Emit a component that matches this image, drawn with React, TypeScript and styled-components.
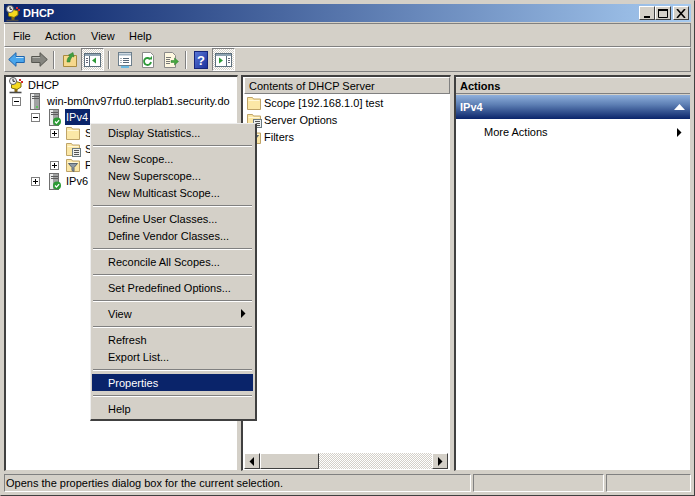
import React from "react";
import styled, { createGlobalStyle } from "styled-components";

const Global = createGlobalStyle`
  html, body { margin: 0; padding: 0; background: #d4d0c8; }
  * { box-sizing: border-box; }
`;

const Win = styled.div`
  position: relative;
  width: 695px;
  height: 496px;
  overflow: hidden;
  display: flex;
  flex-direction: column;
  background: #d4d0c8;
  color: #000;
  font: 11px/16px "Liberation Sans", "Noto Sans", sans-serif;
  border-style: solid;
  border-width: 1px;
  border-color: #d4d0c8 #404040 #404040 #d4d0c8;
  padding: 3px;
`;

const TitleBar = styled.div`
  height: 18px;
  flex: none;
  display: flex;
  align-items: center;
  padding: 0 2px 0 1px;
  background: linear-gradient(90deg, #0a246a 0%, #a6caf0 100%);
  color: #fff;
  font-weight: 700;
  font-size: 11px;
`;
const TitleText = styled.span`
  margin-left: 2px;
  flex: 1;
`;
const WinButton = styled.div<{ $gap?: number }>`
  width: 16px;
  height: 14px;
  margin-left: ${(p) => p.$gap ?? 0}px;
  background: #d4d0c8;
  border-style: solid;
  border-width: 1px;
  border-color: #fff #404040 #404040 #fff;
  display: flex;
  align-items: center;
  justify-content: center;
`;

const MenuBar = styled.div`
  height: 24px;
  flex: none;
  margin-top: 1px;
  display: flex;
  align-items: center;
  padding: 1px 0 0 8px;
  border-style: solid;
  border-width: 1px;
  border-color: #808080 #808080 #808080 #fff;
`;
const MenuLabel = styled.span<{ $w: number }>`
  width: ${(p) => p.$w}px;
`;

const ToolBar = styled.div`
  height: 25px;
  flex: none;
  display: flex;
  align-items: center;
  border-style: solid;
  border-width: 1px;
  border-color: #fff #808080 #808080 #fff;
`;
const ToolButton = styled.div<{ $pressed?: boolean }>`
  width: 23px;
  height: 23px;
  flex: none;
  display: flex;
  align-items: center;
  justify-content: center;
  ${(p) =>
    p.$pressed
      ? `border: 1px solid; border-color: #808080 #fff #fff #808080;
         background: repeating-conic-gradient(#fff 0 25%, #d4d0c8 0 50%) 0 0 / 2px 2px;`
      : ""}
`;
const ToolSep = styled.div<{ $l: number; $r: number }>`
  width: 2px;
  height: 18px;
  flex: none;
  margin: 0 ${(p) => p.$r}px 0 ${(p) => p.$l}px;
  border-left: 1px solid #808080;
  border-right: 1px solid #fff;
`;

const Panes = styled.div`
  flex: 1;
  min-height: 0;
  display: flex;
  margin-top: 3px;
  gap: 3px;
`;
const Pane = styled.div<{ $w: number }>`
  width: ${(p) => p.$w}px;
  flex: none;
  background: #fff;
  border-style: solid;
  border-width: 2px 1px 1px 2px;
  border-color: #404040 #d4d0c8 #d4d0c8 #404040;
  display: flex;
  flex-direction: column;
  min-height: 0;
`;
const TreeBody = styled.div`
  flex: 1;
`;
const TreeRow = styled.div`
  height: 16px;
  display: flex;
  align-items: center;
  white-space: nowrap;
  padding-left: 2px;
`;
const Indent = styled.div<{ $level: number }>`
  width: ${(p) => p.$level * 19}px;
  flex: none;
  display: flex;
  justify-content: flex-end;
  padding-right: 6px;
`;
const Expander = styled.div`
  width: 9px;
  height: 9px;
  border: 1px solid #808080;
  background: #fff;
  position: relative;
  &::before {
    content: "";
    position: absolute;
    left: 1px;
    right: 1px;
    top: 3px;
    height: 1px;
    background: #000;
  }
`;
const ExpanderPlus = styled(Expander)`
  &::after {
    content: "";
    position: absolute;
    top: 1px;
    bottom: 1px;
    left: 3px;
    width: 1px;
    background: #000;
  }
`;
const IconSlot = styled.div`
  width: 16px;
  height: 16px;
  flex: none;
  display: flex;
  align-items: center;
  justify-content: center;
`;
const NodeLabel = styled.span<{ $selected?: boolean }>`
  margin-left: ${(p) => (p.$selected ? 3 : 4)}px;
  padding: 0 ${(p) => (p.$selected ? 2 : 0)}px 0 ${(p) => (p.$selected ? 1 : 0)}px;
  ${(p) => (p.$selected ? "background:#0a246a;color:#fff;" : "")}
`;

const ColumnHeader = styled.div`
  height: 17px;
  flex: none;
  background: #d4d0c8;
  margin-left: 1px;
  padding-left: 4px;
  border-style: solid;
  border-width: 1px;
  border-color: #fff #808080 #808080 #fff;
  display: flex;
  align-items: center;
`;
const ListBody = styled.div`
  flex: 1;
  padding-left: 3px;
`;
const ListRow = styled.div`
  height: 17px;
  display: flex;
  align-items: center;
  gap: 2px;
`;
const ScrollBar = styled.div`
  height: 16px;
  flex: none;
  display: flex;
  margin: 0 2px 1px 1px;
  background: repeating-conic-gradient(#fff 0 25%, #d4d0c8 0 50%) 0 0 / 2px 2px;
`;
const ScrollButton = styled.div<{ $w: number }>`
  width: ${(p) => p.$w}px;
  flex: none;
  background: #d4d0c8;
  border-style: solid;
  border-width: 1px;
  border-color: #fff #404040 #404040 #fff;
  display: flex;
  align-items: center;
  justify-content: center;
`;
const Track = styled.div`
  flex: 1;
`;

const ActionsHeader = styled.div`
  height: 17px;
  flex: none;
  background: #d4d0c8;
  font-weight: 700;
  padding-left: 4px;
  display: flex;
  align-items: center;
  border-bottom: 1px solid #808080;
  border-top: 1px solid #fff;
`;
const ActionBand = styled.div`
  height: 25px;
  flex: none;
  border-top: 1px solid #d4d0c8;
  background: linear-gradient(180deg, #8fb0dc 0%, #5d7fb4 40%, #0a246a 100%);
  color: #fff;
  font-weight: 700;
  display: flex;
  align-items: center;
  justify-content: space-between;
  padding: 0 5px 0 4px;
`;
const ActionItem = styled.div`
  height: 26px;
  display: flex;
  align-items: center;
  justify-content: space-between;
  padding: 0 8px 0 28px;
`;

const StatusBar = styled.div`
  height: 18px;
  flex: none;
  margin-top: 3px;
  display: flex;
  gap: 2px;
`;
const StatusCell = styled.div<{ $w?: number }>`
  ${(p) => (p.$w ? `width:${p.$w}px;flex:none;` : "flex:1;")}
  padding: 0 0 1px 1px;
  display: flex;
  align-items: center;
  white-space: nowrap;
  border-style: solid;
  border-width: 1px;
  border-color: #808080 #fff #fff #808080;
`;

const ContextMenu = styled.div`
  position: absolute;
  left: 89px;
  top: 122px;
  width: 167px;
  height: 298px;
  background: #d4d0c8;
  padding: 0 2px 0 1px;
  border-style: solid;
  border-width: 1px 2px 2px 1px;
  border-color: #eeeeee #404040 #404040 #eeeeee;
  display: flex;
  flex-direction: column;
`;
const MenuItem = styled.div<{ $active?: boolean }>`
  height: 17px;
  flex: none;
  padding: 0 7px 0 16px;
  display: flex;
  align-items: center;
  justify-content: space-between;
  ${(p) => (p.$active ? "background:#0a246a;color:#fff;" : "")}
`;
const MenuSep = styled.div`
  height: 2px;
  flex: none;
  margin: 4px 1px 3px 1px;
  border-top: 1px solid #808080;
  border-bottom: 1px solid #fff;
`;

const Server = ({ check }: { check?: boolean }) => (
  <svg width="16" height="17" viewBox="0 0 16 17">
    <rect x="3.500" y=".5" width="9" height="16" fill="#a0a2a2" stroke="#707070" />
    <rect x="4" y="1" width="3" height="15" fill="#eceded" />
    <path d="M5 3.500h7M5 5.500h7" stroke="#5c5c5c" />
    <rect x="9" y="13" width="2" height="2" fill="#5fc05f" />
    {check && (
      <>
        <circle cx="11" cy="12.500" r="4" fill="#2c9a35" />
        <path d="M9 12.500l1.500 1.600 2.600-3" stroke="#fff" strokeWidth="1.300" fill="none" />
      </>
    )}
  </svg>
);
const FolderShape = () => (
  <>
    <path d="M1.500 14.500V2.500h5l1 1.500h7v10.500z" fill="#fbe7a6" stroke="#bfa468" />
    <path d="M2.500 5.500h11" stroke="#fff7d8" />
  </>
);
const Folder = () => (
  <svg width="16" height="16" viewBox="0 0 16 16">
    <FolderShape />
  </svg>
);
const OptionsFolder = () => (
  <svg width="16" height="16" viewBox="0 0 16 16">
    <FolderShape />
    <rect x="7.500" y="7.500" width="8" height="8" fill="#eef0f0" stroke="#6b7a80" />
    <path d="M9 9.500h5M9 11.500h5M9 13.500h5" stroke="#555" />
  </svg>
);
const FilterFolder = () => (
  <svg width="16" height="16" viewBox="0 0 16 16">
    <FolderShape />
    <path d="M3.500 6.500h9l-3.500 4v4l-2-1v-3z" fill="#8e9aa6" stroke="#5a6672" />
  </svg>
);
const DhcpIcon = () => (
  <svg width="16" height="17" viewBox="0 0 16 17">
    <rect x="6.500" y="10" width="3" height="5" fill="#8a6a10" />
    <path d="M1.500 15.500h12" stroke="#4a4a4a" strokeWidth="1.600" />
    <path d="M3.500 7.500l4.500-3 5 1.500v4l-4 2.500-5.500-1.500z" fill="#f5d91f" stroke="#7f6f0c" />
    <circle cx="5" cy="4" r="3.500" fill="#f4f4f4" stroke="#5a5a5a" />
    <path d="M5 1.800V4.300h2" stroke="#222" fill="none" />
    <rect x="11" y="2" width="2" height="2" fill="#d82a2a" />
    <rect x="13" y="4" width="2" height="2" fill="#d82a2a" />
  </svg>
);
const Triangle = ({ dir, color = "#000" }: { dir: "l" | "r"; color?: string }) => (
  <svg width="6" height="9" viewBox="0 0 6 9">
    <path d={dir === "r" ? "M1 0l4.500 4.500L1 9z" : "M5 0L.5 4.500 5 9z"} fill={color} />
  </svg>
);

const BackIcon = () => (
  <svg width="17" height="15" viewBox="0 0 17 15">
    <path d="M.7 7.500L8 .7V4.500h8.300v6H8v3.800z" fill="#4aa6ec" stroke="#1f64ad" />
    <path d="M8 5.500h7.500" stroke="#c4e6fc" />
  </svg>
);
const ForwardIcon = () => (
  <svg width="17" height="15" viewBox="0 0 17 15">
    <path d="M16.300 7.500L9 .7V4.500H.7v6H9v3.800z" fill="#85857f" stroke="#55554f" />
    <path d="M1.500 5.500H9" stroke="#b8b8b2" />
  </svg>
);
const UpIcon = () => (
  <svg width="16" height="16" viewBox="0 0 16 16">
    <path d="M1.500 14.500V3.500h13v11z" fill="#f6d88c" stroke="#a88a40" />
    <path d="M5 10c0-3 1-5 3-6L6.500 3 11 .5 12 5 10.500 4.500C9 6 8 8 8 10z" fill="#3f9e3f" stroke="#2c7a2c" strokeWidth=".5" />
  </svg>
);
const PaneIcon = ({ right }: { right?: boolean }) => (
  <svg width="17" height="16" viewBox="0 0 17 16">
    <rect x=".5" y="1.500" width="16" height="13" fill="#fff" stroke="#5d6f7c" />
    <rect x="1" y="2" width="15" height="2" fill="#8fa3b2" />
    <path d={right ? "M11.500 4v10" : "M5.500 4v10"} stroke="#5d6f7c" />
    <path d={right ? "M13 6.500h2M13 8.500h2M13 10.500h2" : "M2 6.500h2M2 8.500h2M2 10.500h2"} stroke="#667" />
    <path d={right ? "M4 5.500l4 3-4 3z" : "M12 5.500l-4 3 4 3z"} fill="#2c9a35" />
  </svg>
);
const ListIcon = () => (
  <svg width="16" height="16" viewBox="0 0 16 16">
    <rect x="1.500" y=".5" width="13" height="13" fill="#fff" stroke="#6d7f8c" />
    <path d="M2 2.500h12" stroke="#9fb3c2" strokeWidth="2" />
    <path d="M6 6.500h6M6 8.500h6M6 10.500h6M3.500 6.500h1M3.500 8.500h1M3.500 10.500h1" stroke="#567" />
    <path d="M4 15h8" stroke="#4fb4ea" strokeWidth="1.600" />
  </svg>
);
const RefreshIcon = () => (
  <svg width="14" height="16" viewBox="0 0 14 16">
    <path d="M1.500 .5h8l3 3v12h-11z" fill="#fff" stroke="#8a8a8a" />
    <path d="M10 10a3.500 3.500 0 1 1-1-3" fill="none" stroke="#2f9a3a" strokeWidth="1.800" />
    <path d="M7.500 7.500H11V4z" fill="#2f9a3a" />
  </svg>
);
const ExportIcon = () => (
  <svg width="16" height="16" viewBox="0 0 16 16">
    <path d="M1.500 .5h8l3 3v12h-11z" fill="#fff8e0" stroke="#8a8a8a" />
    <path d="M3 5.500h5M3 7.500h4M3 9.500h4M3 11.500h4" stroke="#777" />
    <path d="M8 8.500h3.500V6l4 3.500-4 3.500v-2.500H8z" fill="#46a83f" stroke="#2c7a2c" strokeWidth=".5" />
  </svg>
);
const HelpIcon = () => (
  <svg width="14" height="18" viewBox="0 0 14 18">
    <defs>
      <linearGradient id="hb" x1="0" y1="0" x2="1" y2="1">
        <stop offset="0" stopColor="#5a78d8" />
        <stop offset="1" stopColor="#1a2f9a" />
      </linearGradient>
    </defs>
    <rect x=".5" y=".5" width="13" height="17" fill="url(#hb)" stroke="#16257a" />
    <text x="7" y="14" fill="#fff" fontSize="13" fontWeight="700" textAnchor="middle" fontFamily="Liberation Sans">?</text>
  </svg>
);

const CloseGlyph = () => (
  <svg width="10" height="9" viewBox="0 0 10 9">
    <path d="M1 0l8 9M9 0L1 9" stroke="#000" strokeWidth="1.600" />
  </svg>
);
const MinGlyph = () => (
  <svg width="10" height="9" viewBox="0 0 10 9">
    <path d="M2 8h6" stroke="#000" strokeWidth="2" />
  </svg>
);
const MaxGlyph = () => (
  <svg width="10" height="9" viewBox="0 0 10 9">
    <path d="M.5 1.500h9v7h-9z" fill="none" stroke="#000" />
    <path d="M0 1h10" stroke="#000" strokeWidth="2" />
  </svg>
);
const CollapseGlyph = () => (
  <svg width="11" height="6" viewBox="0 0 11 6">
    <path d="M5.500 0L11 6H0z" fill="#fff" />
  </svg>
);

const tree = [
  { level: 0, icon: <DhcpIcon />, text: "DHCP" },
  { level: 1, exp: "-", icon: <Server />, text: "win-bm0nv97rfu0.terplab1.security.do" },
  { level: 2, exp: "-", icon: <Server check />, text: "IPv4", selected: true },
  { level: 3, exp: "+", icon: <Folder />, text: "Scope [192.168.1.0] test" },
  { level: 3, icon: <OptionsFolder />, text: "Server Options" },
  { level: 3, exp: "+", icon: <FilterFolder />, text: "Filters" },
  { level: 2, exp: "+", icon: <Server check />, text: "IPv6" },
];

const list = [
  { icon: <Folder />, text: "Scope [192.168.1.0] test" },
  { icon: <OptionsFolder />, text: "Server Options" },
  { icon: <FilterFolder />, text: "Filters" },
];

type Entry = string | null | { t: string; active?: boolean; sub?: boolean };
const menu: Entry[] = [
  "Display Statistics...",
  null,
  "New Scope...",
  "New Superscope...",
  "New Multicast Scope...",
  null,
  "Define User Classes...",
  "Define Vendor Classes...",
  null,
  "Reconcile All Scopes...",
  null,
  "Set Predefined Options...",
  null,
  { t: "View", sub: true },
  null,
  "Refresh",
  "Export List...",
  null,
  { t: "Properties", active: true },
  null,
  "Help",
];

export default function App() {
  return (
    <Win>
      <Global />
      <TitleBar>
        <DhcpIcon />
        <TitleText>DHCP</TitleText>
        <WinButton><MinGlyph /></WinButton>
        <WinButton><MaxGlyph /></WinButton>
        <WinButton $gap={2}><CloseGlyph /></WinButton>
      </TitleBar>
      <MenuBar>
        <MenuLabel $w={32}>File</MenuLabel>
        <MenuLabel $w={46}>Action</MenuLabel>
        <MenuLabel $w={38}>View</MenuLabel>
        <MenuLabel $w={30}>Help</MenuLabel>
      </MenuBar>
      <ToolBar>
        <ToolButton><BackIcon /></ToolButton>
        <ToolButton><ForwardIcon /></ToolButton>
        <ToolSep $l={2} $r={3} />
        <ToolButton><UpIcon /></ToolButton>
        <ToolButton $pressed><PaneIcon /></ToolButton>
        <ToolSep $l={4} $r={3} />
        <ToolButton><ListIcon /></ToolButton>
        <ToolButton><RefreshIcon /></ToolButton>
        <ToolButton><ExportIcon /></ToolButton>
        <ToolSep $l={3} $r={2} />
        <ToolButton><HelpIcon /></ToolButton>
        <ToolButton $pressed><PaneIcon right /></ToolButton>
      </ToolBar>
      <Panes>
        <Pane $w={234}>
          <TreeBody>
            {tree.map((n) => (
              <TreeRow key={n.text + n.level}>
                {n.level > 0 && (
                  <Indent $level={n.level}>
                    {n.exp === "-" && <Expander />}
                    {n.exp === "+" && <ExpanderPlus />}
                  </Indent>
                )}
                <IconSlot>{n.icon}</IconSlot>
                <NodeLabel $selected={n.selected}>{n.text}</NodeLabel>
              </TreeRow>
            ))}
          </TreeBody>
        </Pane>
        <Pane $w={210}>
          <ColumnHeader>Contents of DHCP Server</ColumnHeader>
          <ListBody>
            {list.map((r) => (
              <ListRow key={r.text}>
                <IconSlot>{r.icon}</IconSlot>
                <span>{r.text}</span>
              </ListRow>
            ))}
          </ListBody>
          <ScrollBar>
            <ScrollButton $w={16}><Triangle dir="l" /></ScrollButton>
            <ScrollButton $w={59} />
            <Track />
            <ScrollButton $w={16}><Triangle dir="r" /></ScrollButton>
          </ScrollBar>
        </Pane>
        <Pane $w={237}>
          <ActionsHeader>Actions</ActionsHeader>
          <ActionBand>
            IPv4
            <CollapseGlyph />
          </ActionBand>
          <ActionItem>
            More Actions
            <Triangle dir="r" />
          </ActionItem>
        </Pane>
      </Panes>
      <StatusBar>
        <StatusCell $w={467}>Opens the properties dialog box for the current selection.</StatusCell>
        <StatusCell $w={131} />
        <StatusCell />
      </StatusBar>
      <ContextMenu>
        {menu.map((m, i) => {
          if (m === null) return <MenuSep key={i} />;
          const e = typeof m === "string" ? { t: m } : m;
          return (
            <MenuItem key={i} $active={e.active}>
              {e.t}
              {e.sub && <Triangle dir="r" color="#000" />}
            </MenuItem>
          );
        })}
      </ContextMenu>
    </Win>
  );
}
